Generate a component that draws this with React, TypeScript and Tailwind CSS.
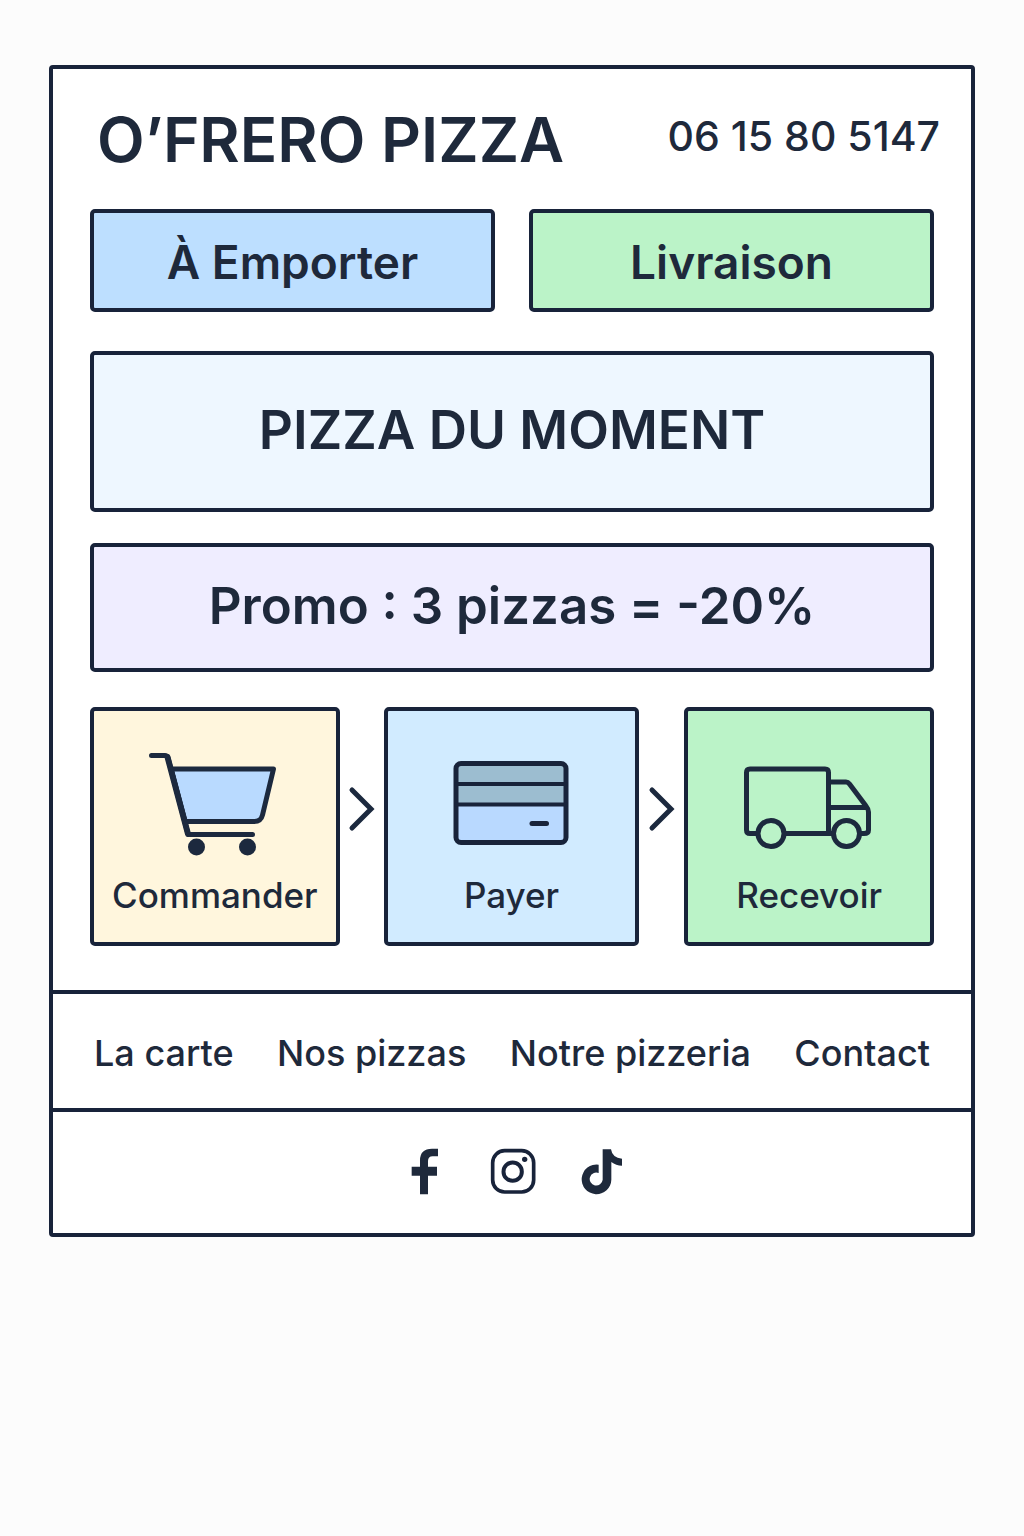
import type { ReactNode } from "react";

const panel = "rounded-[5px] border-4 border-[#18233a]";

function CartIcon() {
  return (
    <svg width="136" height="115" viewBox="0 0 136 115" fill="none" stroke="#1c293e" strokeWidth="5" strokeLinecap="round" strokeLinejoin="round" aria-hidden="true">
      <path d="M24 24H126.500L115.500 70Q114 76.500 107 76.500H38Z" fill="#b9daff" />
      <path d="M4.500 10.500H18Q20 10.500 21 13L40.500 87Q41 89.500 43 89.500H105.500" />
      <path d="M20.500 12L41 89" strokeWidth="6" />
      <circle cx="49.500" cy="102" r="8.500" fill="#1c293e" stroke="none" />
      <circle cx="100.500" cy="102" r="8.500" fill="#1c293e" stroke="none" />
    </svg>
  );
}

function CardIcon() {
  return (
    <svg width="136" height="115" viewBox="0 0 136 115" fill="none" stroke="#18233a" strokeWidth="5" strokeLinecap="round" aria-hidden="true">
      <rect x="13" y="18.500" width="110" height="79" rx="5" fill="#b9d9ff" stroke="none" />
      <path d="M13 20H123V59H13Z" fill="#9cbdd0" stroke="none" />
      <rect x="13" y="18.500" width="110" height="79" rx="5" />
      <path d="M13 39H123M13 59.500H123" strokeWidth="4" />
      <path d="M89 78.500H103.500" />
    </svg>
  );
}

function TruckIcon() {
  return (
    <svg width="136" height="115" viewBox="0 0 136 115" fill="none" stroke="#1c293e" strokeWidth="5" strokeLinejoin="round" aria-hidden="true">
      <path d="M16 88.500H9Q5.500 88.500 5.500 85V27.500Q5.500 24 9 24H84Q87.500 24 87.500 27.500V88.500M43 88.500H93" />
      <path d="M87.500 37H105Q107 37 108.500 39L125 61Q127.500 64 127.500 67V85Q127.500 88.500 123 88.500H119M87.500 62.500H125" />
      <circle cx="30" cy="88.500" r="13" />
      <circle cx="105.500" cy="88.500" r="13" />
    </svg>
  );
}

function Arrow() {
  return (
    <svg className="mb-[35px] justify-self-center self-center" width="44" height="48" viewBox="0 0 44 48" fill="none" stroke="#1c293e" strokeWidth="5" strokeLinecap="round" strokeLinejoin="miter" aria-hidden="true">
      <path d="M12 5L31 24L12 43" />
    </svg>
  );
}

function Step({ label, tone, children }: { label: string; tone: string; children: ReactNode }) {
  return (
    <button type="button" className={`${panel} ${tone} flex flex-col items-center pt-[34px] pb-[25px]`}>
      {children}
      <span className="mt-[13px] text-[35px] leading-[44px] font-medium">{label}</span>
    </button>
  );
}

export default function App() {
  return (
    <div className="min-h-screen bg-[#fcfcfc] px-[49px] pt-[65px] pb-12 font-['Inter','Liberation_Sans',sans-serif] text-[#1e293b]">
      <div className="rounded-[4px] border-4 border-[#18233a] bg-white">
        <header className="flex items-start justify-between pt-[33px] pr-[31px] pb-[31px] pl-[44px]">
          <h1 className="text-[62px] leading-[76px] font-semibold whitespace-nowrap">O’FRERO PIZZA</h1>
          <a href="tel:0615805147" className="pt-[7px] text-[41px] leading-[54px] font-medium whitespace-nowrap">06 15 80 5147</a>
        </header>

        <main className="px-[37px] pb-[44px]">
          <div className="grid grid-cols-2 gap-[34px] text-[46px] leading-[55px] font-semibold">
            <button type="button" className={`${panel} bg-[#bddfff] pt-[22px] pb-[18px]`}>À Emporter</button>
            <button type="button" className={`${panel} bg-[#bbf3c8] pt-[22px] pb-[18px]`}>Livraison</button>
          </div>

          <section className={`${panel} mt-[39px] bg-[#eef7ff] pt-[44px] pb-[46px] text-center`}>
            <h2 className="text-[53px] leading-[63px] font-semibold">PIZZA DU MOMENT</h2>
          </section>

          <section className={`${panel} mt-[31px] bg-[#efedff] pt-[27px] pb-[31px] text-center`}>
            <p className="text-[51px] leading-[63px] font-semibold">Promo : 3 pizzas = -20%</p>
          </section>

          <div className="mt-[35px] grid grid-cols-[250fr_44px_256fr_45px_250fr]">
            <Step label="Commander" tone="bg-[#fff6dd]"><CartIcon /></Step>
            <Arrow />
            <Step label="Payer" tone="bg-[#d1ebff]"><CardIcon /></Step>
            <Arrow />
            <Step label="Recevoir" tone="bg-[#bbf3c8]"><TruckIcon /></Step>
          </div>
        </main>

        <nav className="flex justify-between border-t-4 border-[#18233a] px-[41px] pt-[37px] pb-[33px] text-[36px] leading-[44px] font-medium whitespace-nowrap">
          <a href="#carte">La carte</a>
          <a href="#pizzas">Nos pizzas</a>
          <a href="#pizzeria">Notre pizzeria</a>
          <a href="#contact">Contact</a>
        </nav>

        <footer className="flex items-center justify-center gap-[45px] border-t-4 border-[#18233a] pt-[36px] pb-[38px] pl-[9px]">
          <a href="#facebook" aria-label="Facebook">
            <svg className="block" width="34" height="47" viewBox="60 55 102 141" fill="#1e293b" aria-hidden="true">
              <path d="M87 194V138H62V111H87V92Q87 57 123 57H141V80H125Q111 80 111 94V111H138V138H111V194Z" />
            </svg>
          </a>
          <a href="#instagram" aria-label="Instagram">
            <svg className="block" width="46" height="47" viewBox="298 54 138 141" fill="none" stroke="#18233a" strokeWidth="11" aria-hidden="true">
              <rect x="306" y="62" width="123" height="124" rx="36" />
              <circle cx="366" cy="125" r="27.500" strokeWidth="12" />
              <circle cx="402" cy="88" r="8" fill="#18233a" stroke="none" />
            </svg>
          </a>
          <a href="#tiktok" aria-label="TikTok">
            <svg className="block" width="42" height="47" viewBox="574 55 126 141" fill="#1e293b" aria-hidden="true">
              <path d="M639 59H664Q668 85 697 87V108Q679 108 665 97V150A44.500 44.500 0 1 1 627 105V130A19.500 19.500 0 1 0 639 150Z" />
            </svg>
          </a>
        </footer>
      </div>
    </div>
  );
}
